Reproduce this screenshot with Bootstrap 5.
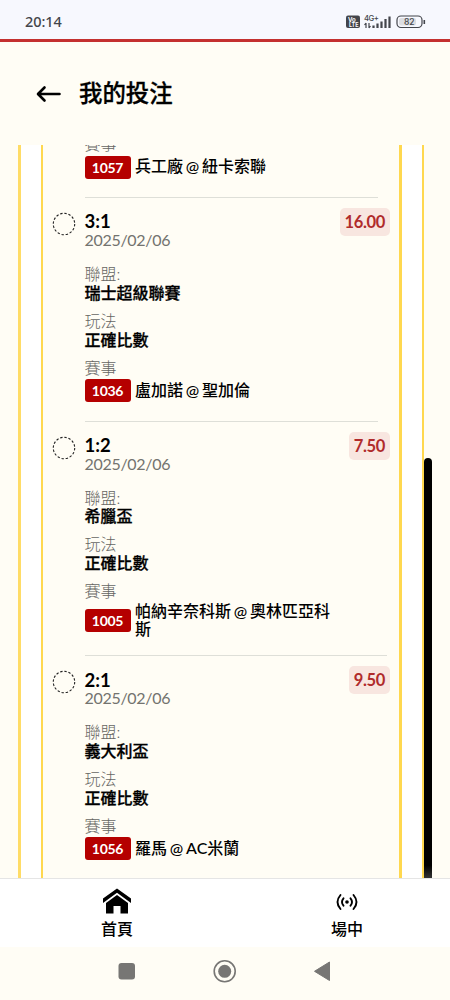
<!DOCTYPE html>
<html lang="zh-Hant">
<head>
<meta charset="utf-8">
<meta name="viewport" content="width=device-width, initial-scale=1">
<title>我的投注</title>
<link href="https://cdn.jsdelivr.net/npm/bootstrap@5.3.0/dist/css/bootstrap.min.css" rel="stylesheet">
<style>
body{width:450px;height:1000px;overflow:hidden;background:#fffdf5;color:#000;font-family:Lato,"Noto Sans CJK TC",sans-serif;font-size:16px;line-height:18.7px}
svg{display:block;flex:none}
.status{height:42px;background:#f7f8fe;border-bottom:3px solid #c4302f;padding:2px 24px 0 25px;color:#43454b}
.clock{font:500 14.5px/20px "Noto Sans",sans-serif;letter-spacing:-.1px}
.topbar{height:103px;padding-left:36px;gap:18px}
.topbar h1{font-size:23.4px;font-weight:500;-webkit-text-stroke:.3px #000}
.scroller{height:733px;padding:0 26px 0 18px}
.outer{background:#fff;border:solid #ffd84f;border-width:0 2px 0 3px;border-left-color:#ffdc66;padding:0 20px;height:733px}
.slip{background:#fffdf5;border:solid #ffd84f;border-width:0 3px 0 2px;height:733px;overflow:hidden;padding:0 10px}
.pick{width:305px;margin-left:31.5px;position:relative;padding-top:14.2px}
.first-pick{padding-top:0;margin-top:-9.6px}
.rule{height:1px;background:#dedfd8;width:293px;margin-top:18.4px}
.rule-wide{width:302px;margin-top:16.8px}
.score{font-size:18.5px;font-weight:700;line-height:18.7px}
.muted{color:#666663;font-weight:300}
.muted,.date{height:18.7px}
.date{color:#73736f;letter-spacing:-.3px}
.val{font-weight:500}
.val b{font-weight:500;-webkit-text-stroke:.3px #000}
.ring{position:absolute;left:-32.5px;top:14px}
.odds{position:absolute;right:0;top:10px;height:28px;line-height:28px;padding:0 4.6px;border-radius:5px;background:#f8e6e0;color:#b02b2b;font-size:16.500px;letter-spacing:-.35px;font-weight:700}
.group{margin-bottom:9.3px}
.league{margin-top:15.500px}
.match{min-height:23px;line-height:18px;gap:4.5px;margin-top:1.8px;word-spacing:-1.2px}
.match span:last-child{position:relative;top:-1px}
.two-line{width:200px}
.code{width:46px;height:23px;line-height:23px;background:#b50000;color:#fff;font-size:14px;letter-spacing:-.3px;font-weight:700;text-align:center;border-radius:3px;flex:none}
.thumb{position:absolute;left:424px;top:458px;width:8px;height:420px;border-radius:4px 4px 0 0;background:linear-gradient(#000 97%,#333)}
.tabs{height:69px;background:#fff;border-top:1px solid #e5e5e5;padding-left:2px}
.tab{width:230px;flex:none;font-weight:500;gap:5px}
.sysnav{height:53px}
</style>
<script src="https://cdn.jsdelivr.net/npm/bootstrap@5.3.0/dist/js/bootstrap.bundle.min.js"></script>
</head>
<body>
<header class="status d-flex align-items-center justify-content-between">
  <span class="clock">20:14</span>
  <svg width="80" height="16" viewBox="346 12 80 16" font-family="Inter,sans-serif" font-weight="700">
    <rect x="346" y="14.5" width="14" height="12.5" rx="2" fill="#43454b"/>
    <text x="348" y="20.8" font-size="6" fill="#fff">Vo</text><text x="349" y="26" font-size="5.5" fill="#fff" textLength="9.5" lengthAdjust="spacingAndGlyphs">LTE</text>
    <text x="364" y="19.6" font-size="7.7" font-weight="500" fill="#43454b" textLength="15">4G+</text>
    <path d="M366 22v5M364.500 24l1.500-2M369 22v5M370.500 25L369 27" stroke="#43454b" stroke-width="1.200" fill="none"/>
    <path d="M373.500 24.500V27M377.500 22.500V27M381.500 20.500V27M385.500 18V27M389.500 15.500V27" stroke="#43454b" stroke-width="2.200"/>
    <rect x="397" y="15" width="25" height="11.500" rx="4" fill="none" stroke="#43454b" stroke-width="1.200"/>
    <rect x="399" y="17" width="17" height="7.500" rx="2" fill="#dcdde1"/>
    <path d="M424.300 19v4" stroke="#43454b" stroke-width="1.600"/>
    <text x="404" y="23.800" font-size="8.500" font-weight="500" fill="#43454b" textLength="10.500">82</text>
  </svg>
</header>
<div class="topbar d-flex align-items-center">
  <svg width="25" height="18" viewBox="0 0 25 18" fill="none" stroke="#000" stroke-width="2.600" stroke-linecap="round" stroke-linejoin="round"><path d="M23.500 9H2.500M8.500 2.500L2 9l6.500 6.500"/></svg>
  <h1 class="mb-0 lh-1">我的投注</h1>
</div>
<main class="scroller">
  <div class="outer"><div class="slip">
    <section class="pick first-pick">
      <div class="muted">賽事</div>
      <div class="match d-flex align-items-center val"><span class="code">1057</span><span>兵工廠 @ 紐卡索聯</span></div>
      <div class="rule"></div>
    </section>
    <section class="pick">
      <svg class="ring" width="24" height="24" viewBox="0 0 24 24"><circle cx="12" cy="12" r="10.700" fill="none" stroke="#222" stroke-width="1.100" stroke-dasharray="2.400 1.800"/></svg>
      <span class="odds">16.00</span>
      <div class="score">3:1</div><div class="date">2025/02/06</div>
      <div class="group league"><div class="muted">聯盟:</div><div class="val"><b>瑞士超級聯賽</b></div></div>
      <div class="group"><div class="muted">玩法</div><div class="val"><b>正確比數</b></div></div>
      <div class="muted">賽事</div>
      <div class="match d-flex align-items-center val"><span class="code">1036</span><span>盧加諾 @ 聖加倫</span></div>
      <div class="rule"></div>
    </section>
    <section class="pick">
      <svg class="ring" width="24" height="24" viewBox="0 0 24 24"><circle cx="12" cy="12" r="10.700" fill="none" stroke="#222" stroke-width="1.100" stroke-dasharray="2.400 1.800"/></svg>
      <span class="odds">7.50</span>
      <div class="score">1:2</div><div class="date">2025/02/06</div>
      <div class="group league"><div class="muted">聯盟:</div><div class="val"><b>希臘盃</b></div></div>
      <div class="group"><div class="muted">玩法</div><div class="val"><b>正確比數</b></div></div>
      <div class="muted">賽事</div>
      <div class="match d-flex align-items-center val"><span class="code">1005</span><span class="two-line">帕納辛奈科斯 @ 奧林匹亞科斯</span></div>
      <div class="rule rule-wide"></div>
    </section>
    <section class="pick">
      <svg class="ring" width="24" height="24" viewBox="0 0 24 24"><circle cx="12" cy="12" r="10.700" fill="none" stroke="#222" stroke-width="1.100" stroke-dasharray="2.400 1.800"/></svg>
      <span class="odds">9.50</span>
      <div class="score">2:1</div><div class="date">2025/02/06</div>
      <div class="group league"><div class="muted">聯盟:</div><div class="val"><b>義大利盃</b></div></div>
      <div class="group"><div class="muted">玩法</div><div class="val"><b>正確比數</b></div></div>
      <div class="muted">賽事</div>
      <div class="match d-flex align-items-center val"><span class="code">1056</span><span>羅馬 @ AC米蘭</span></div>
    </section>
  </div></div>
</main>
<div class="thumb"></div>
<nav class="tabs d-flex">
  <div class="tab d-flex flex-column align-items-center">
    <svg class="mt-2" width="28" height="28" viewBox="0 0 28 28"><path d="M14 1.500L28 11.500V16L14 5.800 0 16V11.500Z"/><path d="M14 8l11 8v10.500h-7.500V19h-7v7.500H3V16Z"/></svg>
    <span>首頁</span>
  </div>
  <div class="tab d-flex flex-column align-items-center">
    <svg class="mt-2" width="28" height="28" viewBox="0 0 28 28" fill="none" stroke="#000" stroke-width="1.900" stroke-linecap="round"><circle cx="14" cy="15" r="1.800" fill="#000" stroke="none"/><path d="M10.500 11.300q-3 3.700 0 7.400M17.500 11.300q3 3.700 0 7.400M7.500 8q-6 7 0 14M20.500 8q6 7 0 14"/></svg>
    <span>場中</span>
  </div>
</nav>
<footer class="sysnav">
  <svg width="450" height="53" viewBox="0 947 450 53" fill="#777674"><rect x="118.500" y="963" width="16.500" height="16.500" rx="3"/><circle cx="224.700" cy="971.300" r="10.500" fill="none" stroke="#777674" stroke-width="1.600"/><circle cx="224.700" cy="971.300" r="6.500"/><path d="M314.500 971.300L329.500 962v18.500Z" stroke="#777674" stroke-linejoin="round"/></svg>
</footer>
</body>
</html>
